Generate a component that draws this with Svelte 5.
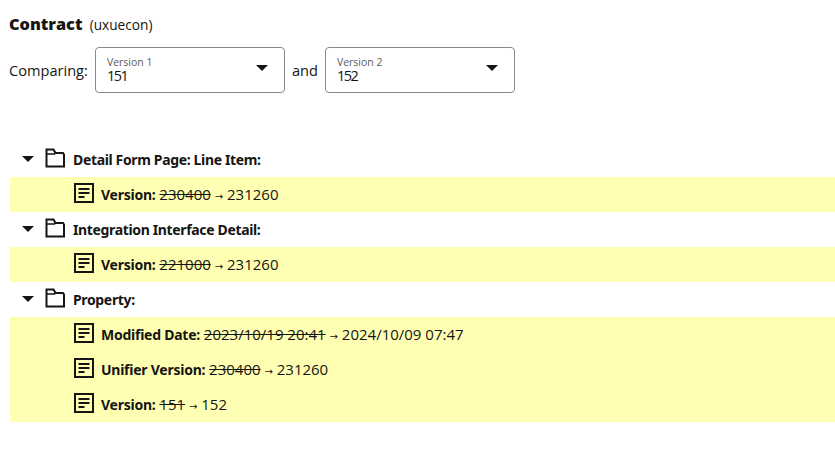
<script>
  const groups = [
    {
      name: "Detail Form Page: Line Item:",
      changes: [{ label: "Version:", from: "230400", to: "231260" }]
    },
    {
      name: "Integration Interface Detail:",
      changes: [{ label: "Version:", from: "221000", to: "231260" }]
    },
    {
      name: "Property:",
      changes: [
        { label: "Modified Date:", from: "2023/10/19 20:41", to: "2024/10/09 07:47" },
        { label: "Unifier Version:", from: "230400", to: "231260" },
        { label: "Version:", from: "151", to: "152" }
      ]
    }
  ];

  const versions = [
    { label: "Version 1", value: "151" },
    { label: "Version 2", value: "152" }
  ];
</script>

<div class="page">
  <h1 class="title">Contract <span class="owner">(uxuecon)</span></h1>

  <div class="compare">
    <span>Comparing:</span>
    {#each versions as version, i}
      {#if i > 0}<span>and</span>{/if}
      <div class="select">
        <div class="select-text">
          <div class="select-label">{version.label}</div>
          <div class="select-value">{version.value}</div>
        </div>
        <svg class="select-arrow" width="12" height="6" viewBox="0 0 12 6"><path d="M0 0h12L6 6z" /></svg>
      </div>
    {/each}
  </div>

  <div class="tree">
    {#each groups as group}
      <div class="group">
        <svg class="disclosure" width="12" height="6" viewBox="0 0 12 6"><path d="M0 0h12L6 6z" /></svg>
        <svg class="icon" width="20" height="20" viewBox="0 0 20 20">
          <path d="M1.500 18.500V1.500h7l2 3.500h7.500l1 1.500v12z" />
          <path class="thin" d="M1.500 6h8l1-1" />
        </svg>
        <span class="group-name">{group.name}</span>
      </div>
      <div class="changes">
        {#each group.changes as change}
          <div class="change">
            <svg class="icon" width="20" height="20" viewBox="0 0 20 20">
              <path d="M1 1h18v18H1z" />
              <path d="M4.500 6h11 M4.500 10h11 M4.500 14h6" />
            </svg>
            <span class="change-text"><b>{change.label}</b> <s>{change.from}</s> <span class="arrow">→</span> {change.to}</span>
          </div>
        {/each}
      </div>
    {/each}
  </div>
</div>

<style>
  :global(body) {
    background: #fff;
  }

  .page {
    padding: 0 0 0 9px;
    font-family: "Open Sans", sans-serif;
    font-size: 15px;
    color: #161513;
  }

  .title {
    margin: 0;
    padding-top: 13px;
    font-size: 16.300px;
    line-height: 22px;
    font-weight: 800;
  }

  .owner {
    margin-left: 3px;
    font-size: 13.700px;
    font-weight: 400;
  }

  .compare {
    display: flex;
    align-items: center;
    gap: 7px;
    margin-top: 11px;
    font-size: 14.600px;
  }

  .select {
    display: flex;
    align-items: center;
    justify-content: space-between;
    box-sizing: border-box;
    width: 190px;
    height: 46px;
    padding: 0 16px 0 11px;
    border: 1px solid #8b8985;
    border-radius: 4px;
  }

  .select-text {
    margin-bottom: 9px;
  }

  .select-label {
    font-size: 10.500px;
    line-height: 12px;
    color: #5d5b57;
    padding-top: 8px;
  }

  .select-value {
    font-size: 14.500px;
    line-height: 15px;
    letter-spacing: -1.500px;
  }

  .select-arrow {
    margin-bottom: 4px;
  }

  .select-arrow path,
  .disclosure path {
    fill: #161513;
  }

  .tree {
    margin-top: 49px;
    margin-left: 1px;
  }

  .group {
    display: flex;
    align-items: center;
    height: 35px;
    padding-left: 12px;
    font-family: "Noto Sans", sans-serif;
  }

  .group .icon {
    margin-bottom: 3px;
  }

  .disclosure {
    margin-right: 11px;
    margin-bottom: 2px;
  }

  .group-name {
    margin-left: 8px;
    margin-bottom: 1px;
    font-size: 14px;
    font-weight: 700;
    letter-spacing: -0.350px;
  }

  .icon {
    flex: none;
  }

  .icon path {
    fill: none;
    stroke: #161513;
    stroke-width: 2;
  }

  .icon path.thin {
    stroke-width: 1.500;
  }

  .changes {
    background: #ffffb3;
  }

  .change {
    display: flex;
    align-items: center;
    height: 35px;
    padding-left: 64px;
  }

  .change .icon {
    margin-bottom: 4px;
  }

  .change-text {
    margin-left: 7px;
    margin-bottom: 2px;
  }

  .change-text b {
    font-family: "Noto Sans", sans-serif;
    font-size: 14px;
    font-weight: 700;
    letter-spacing: -0.250px;
  }

  .arrow {
    font-family: "DejaVu Sans", sans-serif;
    font-size: 10px;
  }
</style>
